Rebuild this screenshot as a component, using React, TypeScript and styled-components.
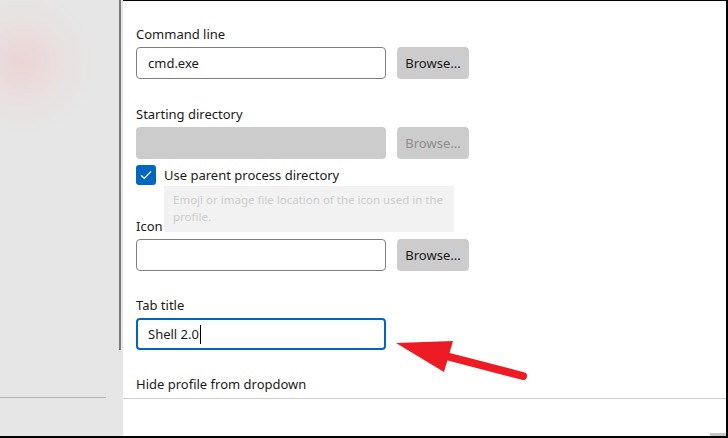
import React from "react";
import styled, { createGlobalStyle } from "styled-components";

const Global = createGlobalStyle`
  html, body { margin: 0; padding: 0; }
  body {
    width: 728px; height: 438px; overflow: hidden; background: #fff;
    font-family: "Noto Sans", "Open Sans", sans-serif; color: #1a1a1a;
  }
`;

const Frame = styled.div`
  position: relative;
  display: flex;
  width: 728px;
  height: 438px;
  box-sizing: border-box;
  border-right: 2px solid #000;
  border-bottom: 2px solid #000;
  overflow: hidden;
`;

const Sidebar = styled.div`
  position: relative;
  flex: 0 0 123px;
  background:
    radial-gradient(circle at 22px 62px, rgba(238, 205, 205, 0.75) 0, rgba(238, 215, 215, 0.35) 40px, rgba(230, 230, 230, 0) 72px),
    #e6e6e6;
  display: flex;
  flex-direction: column;
  justify-content: flex-end;
`;

const SideDivider = styled.div`
  width: 106px;
  height: 1px;
  background: #b5b5b5;
  margin-bottom: 38px;
`;

const ScrollThumb = styled.div`
  position: absolute;
  left: 119px;
  top: 0;
  width: 2px;
  height: 350px;
  background: #7a7a7a;
`;

const Main = styled.div`
  flex: 1;
  display: flex;
  flex-direction: column;
  border-top: 1px solid #000;
`;

const Content = styled.div`
  display: flex;
  flex-direction: column;
  padding: 23px 0 0 13px;
`;

const Divider = styled.div`
  height: 1px;
  background: #cfcfcf;
  margin-top: 1px;
`;

const Label = styled.div<{ $top?: number }>`
  font-size: 13px;
  line-height: 20px;
  height: 20px;
  margin-top: ${(p) => p.$top ?? 0}px;
  margin-bottom: 3px;
  white-space: nowrap;
`;

const Row = styled.div`
  display: flex;
  align-items: center;
  gap: 10px;
  height: 32px;
`;

const Input = styled.div<{ $variant?: "normal" | "disabled" | "focused" }>`
  box-sizing: border-box;
  width: 250px;
  height: 32px;
  border-radius: 4px;
  display: flex;
  align-items: center;
  padding-left: ${(p) => (p.$variant === "focused" ? 10 : 11)}px;
  font-size: 13px;
  color: #1a1a1a;
  background: ${(p) => (p.$variant === "disabled" ? "#cccccc" : "#ffffff")};
  border: ${(p) =>
    p.$variant === "disabled"
      ? "none"
      : p.$variant === "focused"
      ? "2px solid #0067c0"
      : "1px solid #7f7f7f"};
`;

const Caret = styled.span`
  display: inline-block;
  width: 1px;
  height: 19px;
  background: #000;
  margin-left: 1px;
`;

const Button = styled.div<{ $disabled?: boolean }>`
  box-sizing: border-box;
  width: 72px;
  height: 32px;
  border-radius: 4px;
  background: #cccccc;
  color: ${(p) => (p.$disabled ? "#8c8c8c" : "#1a1a1a")};
  font-size: 13px;
  display: flex;
  align-items: center;
  justify-content: center;
  margin-left: 1px;
`;

const CheckRow = styled.div`
  position: relative;
  display: flex;
  align-items: center;
  gap: 8px;
  margin-top: 5px;
  height: 21px;
  font-size: 13px;
`;

const CheckBox = styled.div`
  width: 20px;
  height: 20px;
  border-radius: 3px;
  background: #0067c0;
  display: flex;
  align-items: center;
  justify-content: center;
`;

const Tooltip = styled.div`
  position: absolute;
  left: 28px;
  top: 22px;
  width: 290px;
  height: 46px;
  box-sizing: border-box;
  padding: 5px 8px 0 9px;
  background: #f2f2f2;
  color: #cdcdcd;
  font-size: 11.5px;
  line-height: 17px;
  z-index: 2;
`;

const Arrow = styled.svg`
  position: absolute;
  left: 390px;
  top: 336px;
`;

const CornerGrip = styled.div`
  position: absolute;
  right: 0;
  bottom: 0;
  width: 16px;
  height: 3px;
  background: #c8c8c8;
`;

export default function App() {
  return (
    <>
      <Global />
      <Frame>
        <Sidebar>
          <ScrollThumb />
          <SideDivider />
        </Sidebar>
        <Main>
          <Content>
            <Label>Command line</Label>
            <Row>
              <Input>cmd.exe</Input>
              <Button>Browse...</Button>
            </Row>

            <Label $top={25}>Starting directory</Label>
            <Row>
              <Input $variant="disabled" />
              <Button $disabled>Browse...</Button>
            </Row>

            <CheckRow>
              <CheckBox>
                <svg width="12" height="10" viewBox="0 0 12 10">
                  <path d="M1 5.2 L4.3 8.4 L11 1.4" fill="none" stroke="#fff" strokeWidth="1.3" />
                </svg>
              </CheckBox>
              Use parent process directory
              <Tooltip>Emoji or image file location of the icon used in the profile.</Tooltip>
            </CheckRow>

            <Label $top={31}>Icon</Label>
            <Row>
              <Input />
              <Button>Browse...</Button>
            </Row>

            <Label $top={24}>Tab title</Label>
            <Row>
              <Input $variant="focused">
                Shell 2.0<Caret />
              </Input>
            </Row>

            <Label $top={24}>Hide profile from dropdown</Label>
          </Content>
          <Divider />
        </Main>
        <Arrow width="140" height="48" viewBox="0 0 140 48">
          <path d="M6 7 L63 5 L54 36 Z" fill="#ed1c24" />
          <path d="M52 19 L133 40" stroke="#ed1c24" strokeWidth="8" strokeLinecap="round" />
        </Arrow>
        <CornerGrip />
      </Frame>
    </>
  );
}
